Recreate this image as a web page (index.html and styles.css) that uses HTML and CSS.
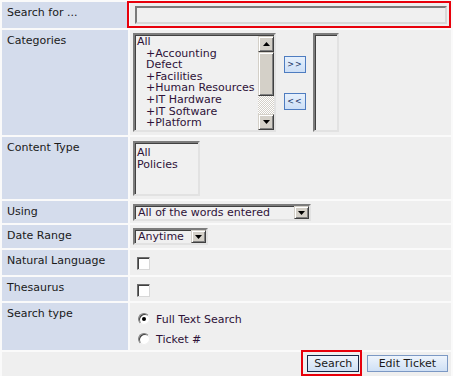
FILE: index.html
```html
<!DOCTYPE html>
<html lang="en">
<head>
    <meta charset="UTF-8">
    <title>Search</title>
    <link rel="stylesheet" href="styles.css">
</head>
<body>

<table class="search-form">
    <tr class="row-search">
        <td class="label">Search for ...</td>
        <td class="value">
            <div class="highlight-box">
                <input type="text" class="text-input">
            </div>
        </td>
    </tr>
    <tr class="row-categories">
        <td class="label">Categories</td>
        <td class="value">
            <div class="picker">
                <div class="listbox categories-list">
                    <div class="list-items">
                        <div>All</div>
                        <div class="sub">+Accounting</div>
                        <div class="sub">Defect</div>
                        <div class="sub">+Facilities</div>
                        <div class="sub">+Human Resources</div>
                        <div class="sub">+IT Hardware</div>
                        <div class="sub">+IT Software</div>
                        <div class="sub">+Platform</div>
                    </div>
                    <div class="scrollbar">
                        <div class="sb-btn">
                            <svg width="7" height="4" viewBox="0 0 7 4"><polygon points="3.5,0 7,4 0,4" fill="#000"/></svg>
                        </div>
                        <div class="sb-thumb"></div>
                        <div class="sb-track"></div>
                        <div class="sb-btn">
                            <svg width="7" height="4" viewBox="0 0 7 4"><polygon points="0,0 7,0 3.5,4" fill="#000"/></svg>
                        </div>
                    </div>
                </div>
                <div class="move-buttons">
                    <button class="move-btn">&gt;&gt;</button>
                    <button class="move-btn">&lt;&lt;</button>
                </div>
                <div class="listbox selected-list"></div>
            </div>
        </td>
    </tr>
    <tr class="row-content">
        <td class="label">Content Type</td>
        <td class="value">
            <div class="listbox content-list">
                <div class="list-items">
                    <div>All</div>
                    <div>Policies</div>
                </div>
            </div>
        </td>
    </tr>
    <tr class="row-using">
        <td class="label">Using</td>
        <td class="value">
            <div class="dropdown using-select">
                <span class="dropdown-text">All of the words entered</span>
                <span class="dropdown-btn">
                    <svg width="7" height="4" viewBox="0 0 7 4"><polygon points="0,0 7,0 3.5,4" fill="#000"/></svg>
                </span>
            </div>
        </td>
    </tr>
    <tr class="row-date">
        <td class="label">Date Range</td>
        <td class="value">
            <div class="dropdown date-select">
                <span class="dropdown-text">Anytime</span>
                <span class="dropdown-btn">
                    <svg width="7" height="4" viewBox="0 0 7 4"><polygon points="0,0 7,0 3.5,4" fill="#000"/></svg>
                </span>
            </div>
        </td>
    </tr>
    <tr class="row-check">
        <td class="label">Natural Language</td>
        <td class="value"><input type="checkbox" class="check"></td>
    </tr>
    <tr class="row-check row-thesaurus">
        <td class="label">Thesaurus</td>
        <td class="value"><input type="checkbox" class="check"></td>
    </tr>
    <tr class="row-type">
        <td class="label">Search type</td>
        <td class="value">
            <label class="radio-line"><span class="radio checked"></span>Full Text Search</label>
            <label class="radio-line"><span class="radio"></span>Ticket #</label>
        </td>
    </tr>
    <tr class="row-actions">
        <td colspan="2" class="actions">
            <span class="highlight-btn"><button class="action-btn primary">Search</button></span>
            <button class="action-btn">Edit Ticket</button>
        </td>
    </tr>
</table>
<div class="bottom-strip"></div>

</body>
</html>
```

FILE: styles.css
```css
body {
    margin: 0;
    background-color: #fafafa;
    font-family: "DejaVu Sans", Verdana, sans-serif;
    font-size: 11px;
    color: #1a1a1a;
}
.search-form {
    width: 453px;
    border-spacing: 2px;
    background-color: #fafafa;
}
.search-form td {
    padding: 0;
    vertical-align: top;
}
.label {
    width: 126px;
    background-color: #d4dcec;
    padding: 4px 5px 0 5px !important;
    line-height: 13px;
    box-sizing: border-box;
}
.value {
    background-color: #efefef;
    padding-left: 3px !important;
    color: #2e1238;
}
.row-search td { height: 26px; }
.row-categories td { height: 105px; }
.row-content td { height: 62px; }
.row-using td { height: 22px; }
.row-date td { height: 23px; }
.row-check td { height: 25px; }
.row-thesaurus td { height: 24px; }
.row-type td { height: 47px; }
.row-actions td { height: 23px; }

/* search box with red marker */
.highlight-box {
    border: 2px solid #e8000b;
    margin: -1px 0 0 -6px;
    padding: 3px 2px 2px 6px;
    height: 18px;
}
.text-input {
    display: block;
    width: 100%;
    height: 18px;
    box-sizing: border-box;
    margin: 0;
    border: 2px solid;
    border-color: #7a7a7a #d8d8d8 #d8d8d8 #7a7a7a;
    background-color: #f0f0f0;
    padding: 0;
}

/* list boxes */
.picker {
    display: flex;
    margin-top: 3px;
}
.listbox {
    box-sizing: border-box;
    border: 2px solid;
    border-color: #7c7c7c #e2e2e2 #e2e2e2 #7c7c7c;
    box-shadow: inset 1px 1px 0 #404040;
    background-color: #f0f0f0;
    line-height: 12px;
}
.categories-list {
    width: 143px;
    height: 99px;
    display: flex;
}
.list-items {
    flex: 1;
    padding: 2px 0 0 2px;
    white-space: nowrap;
    overflow: hidden;
}
.categories-list .list-items {
    padding-top: 1px;
    line-height: 11.6px;
}
.list-items .sub {
    padding-left: 9px;
}
.scrollbar {
    width: 16px;
    display: flex;
    flex-direction: column;
    margin: 1px 0 0 0;
}
.sb-btn, .sb-thumb {
    box-sizing: border-box;
    background-color: #d4d0c8;
    border: 1px solid;
    border-color: #d4d0c8 #404040 #404040 #d4d0c8;
    box-shadow: inset 1px 1px 0 #fff, inset -1px -1px 0 #808080;
}
.sb-btn {
    height: 16px;
    display: flex;
    align-items: center;
    justify-content: center;
}
.sb-thumb {
    height: 45px;
}
.sb-track {
    height: 18px;
    background: repeating-conic-gradient(#d4d0c8 0 25%, #ffffff 0 50%) 0 0 / 2px 2px;
}
.move-buttons {
    display: flex;
    flex-direction: column;
    gap: 20px;
    margin: 23px 0 0 8px;
}
.move-btn {
    width: 22px;
    height: 17px;
    padding: 0;
    border: 1px solid #4e7cc0;
    background: linear-gradient(#e6f0fc, #cddff6);
    color: #1b3566;
    font-family: "DejaVu Sans", Verdana, sans-serif;
    font-size: 8px;
    letter-spacing: 1px;
}
.selected-list {
    width: 26px;
    height: 99px;
    margin-left: 7px;
}
.content-list {
    width: 67px;
    height: 55px;
    margin-top: 4px;
}
.content-list .list-items {
    padding-top: 4px;
}

/* drop downs */
.dropdown {
    display: flex;
    align-items: center;
    box-sizing: border-box;
    height: 17px;
    margin-top: 3px;
    border: 2px solid;
    border-color: #7c7c7c #e2e2e2 #e2e2e2 #7c7c7c;
    box-shadow: inset 1px 1px 0 #404040;
    background-color: #f0f0f0;
}
.using-select { width: 178px; }
.date-select { width: 75px; }
.dropdown-text {
    flex: 1;
    padding-left: 3px;
    white-space: nowrap;
}
.dropdown-btn {
    width: 15px;
    height: 13px;
    box-sizing: border-box;
    display: flex;
    align-items: center;
    justify-content: center;
    background-color: #d4d0c8;
    border: 1px solid;
    border-color: #d4d0c8 #404040 #404040 #d4d0c8;
    box-shadow: inset 1px 1px 0 #fff, inset -1px -1px 0 #808080;
}

/* check boxes and radios */
.check {
    appearance: none;
    display: block;
    width: 13px;
    height: 13px;
    margin: 7px 0 0 4px;
    background-color: #fff;
    border: 1px solid;
    border-color: #6e6e6e #d8d8d8 #d8d8d8 #6e6e6e;
    box-shadow: inset 1px 1px 0 #404040;
}
.radio-line {
    display: flex;
    align-items: center;
    height: 20px;
    gap: 6px;
}
.radio-line:first-child {
    margin-top: 6px;
}
.radio {
    width: 12px;
    height: 12px;
    margin-left: 5px;
    box-sizing: border-box;
    border-radius: 50%;
    background-color: #fff;
    border: 1px solid;
    border-color: #808080 #f0f0f0 #f0f0f0 #808080;
    box-shadow: inset 1px 1px 0 #404040;
    position: relative;
}
.radio.checked::after {
    content: "";
    position: absolute;
    left: 3px;
    top: 3px;
    width: 4px;
    height: 4px;
    border-radius: 50%;
    background-color: #000;
}

/* buttons */
.actions {
    background-color: #efefef;
    text-align: right;
    padding-right: 3px !important;
}
.highlight-btn {
    display: inline-block;
    border: 2px solid #e8000b;
    padding: 3px 1px 2px 4px;
    margin: -2px 0 0 0;
    vertical-align: top;
}
.action-btn {
    height: 17px;
    padding: 0 11px;
    border: 1px solid #7b98c4;
    background: linear-gradient(#eef4fc, #cfe0f5);
    color: #1a1a1a;
    font-family: "DejaVu Sans", Verdana, sans-serif;
    font-size: 11px;
    margin: 3px 0 0 1px;
    vertical-align: top;
}
.action-btn.primary {
    margin: 0;
    border-color: #16294a;
    padding: 0 6px;
}
.bottom-strip {
    height: 4px;
    background-color: #dde3f0;
}
```
